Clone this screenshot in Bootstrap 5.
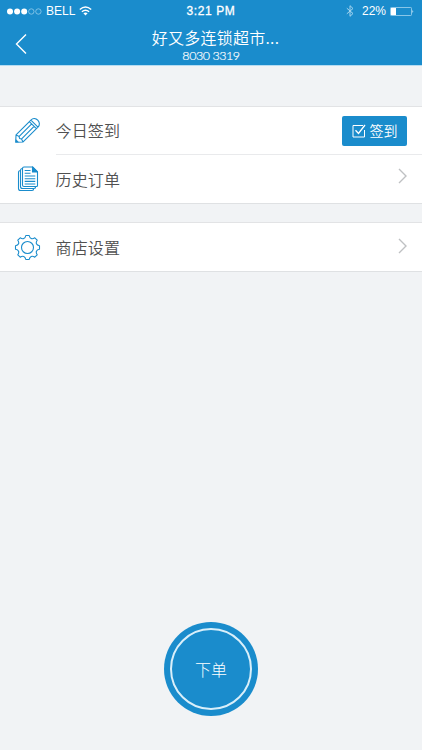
<!DOCTYPE html>
<html lang="zh-CN">
<head>
<meta charset="utf-8">
<meta name="viewport" content="width=device-width, initial-scale=1">
<title>好又多连锁超市</title>
<link href="https://cdn.jsdelivr.net/npm/bootstrap@5.3.0/dist/css/bootstrap.min.css" rel="stylesheet">
<style>
:root{--brand:#1a8ccc}
body{background:#f1f3f5;font-family:"Liberation Sans","Noto Sans CJK SC",sans-serif;color:#505050}
svg{display:block;flex:none;overflow:visible}
.screen{height:750px;overflow:hidden}
.topbar{height:66px;background:var(--brand);border-bottom:1px solid #b5dcf2}
.status{height:21px;font-size:12px;line-height:21px;display:grid;grid-template-columns:1fr 50px 1fr}
.status span{padding-top:1px}
.clock{letter-spacing:.6px;-webkit-text-stroke:.3px #fff;white-space:nowrap}
.titlebar{height:44px;display:grid;grid-template-columns:48px 1fr 48px}
.shop{font:350 16px/20px "Noto Sans CJK SC",sans-serif;letter-spacing:.25px;padding-top:6px;padding-left:9px}
.phone{font:300 12.5px/14px Lato,sans-serif;letter-spacing:-.45px;margin-top:2px;-webkit-text-stroke:.2px #fff}
.group{border-top:1px solid #e2e3e5;border-bottom:1px solid #dfe1e3;padding-left:15px}
.first{margin-top:40px;height:98px}
.second{margin-top:18px;height:50px}
.entry{height:48px}
.icon-cell{width:25px;margin-right:15.5px}
.entry .body{height:48px;padding-right:15px}
.ruled{border-bottom:1px solid #e9eaec}
.label{font:350 16px/24px "Noto Sans CJK SC",sans-serif;letter-spacing:.15px;padding-bottom:1px}
.sign{width:65px;height:30px;background:var(--brand);border-radius:2px;font:350 14px/20px "Noto Sans CJK SC",sans-serif;gap:4px}
.sign span{padding-bottom:2px}
.order{width:94px;height:94px;background:var(--brand);margin-bottom:34px;padding:6px}
.ring{border:2px solid #d9effa;font:300 16px/24px "Noto Sans CJK SC",sans-serif}
</style>
<script src="https://cdn.jsdelivr.net/npm/bootstrap@5.3.0/dist/js/bootstrap.bundle.min.js"></script>
</head>
<body>
<div class="screen d-flex flex-column">
  <header class="topbar text-white">
    <div class="status">
      <div class="d-flex align-items-center ps-2">
        <svg width="34" height="7" viewBox="0 0 34 7"><g fill="#fff"><circle cx="2" cy="3.5" r="3"/><circle cx="9.1" cy="3.5" r="3"/><circle cx="16.2" cy="3.5" r="3"/></g><g fill="none" stroke="#a5d5ef" stroke-width=".7"><circle cx="23.3" cy="3.5" r="2.7"/><circle cx="30.4" cy="3.5" r="2.7"/></g></svg>
        <span class="ms-1">BELL</span>
        <svg class="ms-1" width="13" height="10" viewBox="0 0 13 10"><g fill="none" stroke="#fff" stroke-width="1.5"><path d="M.8 3.5Q6.5-1.4 12.2 3.5M2.9 5.8Q6.5 2.6 10.1 5.8"/></g><path d="M4.4 7.3Q6.5 5.6 8.6 7.3L6.5 9.5Z" fill="#fff"/></svg>
      </div>
      <span class="clock text-center">3:21 PM</span>
      <div class="d-flex align-items-center justify-content-end">
        <svg width="8" height="12" viewBox="0 0 8 12"><path d="M.8 3.2L7 8.5 4 11.3V.7L7 3.5.8 8.8" fill="none" stroke="#a5d5ef"/></svg>
        <span class="ms-2">22%</span>
        <svg width="24" height="9" viewBox="0 0 24 9" class="ms-1 me-2"><rect x=".5" y=".5" width="21" height="8" rx=".8" fill="none" stroke="#a5d5ef" stroke-width=".8"/><path d="M1 1h5v7H1z" fill="#fff"/><path d="M22.5 3q1.5 1.5 0 3z" fill="#fff"/></svg>
      </div>
    </div>
    <div class="titlebar">
      <svg width="48" height="44" viewBox="0 0 48 44"><path d="M26 13.5L16.5 23 26 32.5" fill="none" stroke="#fff" stroke-width="1.4"/></svg>
      <div class="text-center">
        <div class="shop">好又多连锁超市...</div>
        <div class="phone">8030 3319</div>
      </div>
    </div>
  </header>

  <section class="group first bg-white">
    <div class="entry d-flex align-items-center">
      <div class="icon-cell">
        <svg width="25" height="26" viewBox="0 0 25 26" fill="none" stroke="#1a8ccc" stroke-width="1.1" stroke-linejoin="round"><g transform="translate(12 13) rotate(45)"><path d="M-5-10.5C-5-16.8 5-16.8 5-10.5V10.5L0 16 -5 10.5ZM-5-10.5H5M-5-8.3H5M-1.7-8.3V10M1.7-8.3V10M-5 10.5L-1.7 9.5 0 10.5 1.7 9.5 5 10.5"/><path d="M-2.2 13.6H2.2L0 16Z" fill="#1a8ccc" stroke="none"/></g></svg>
      </div>
      <div class="body ruled d-flex flex-fill align-items-center justify-content-between">
        <span class="label">今日签到</span>
        <button type="button" class="sign btn p-0 border-0 text-white d-flex align-items-center justify-content-center">
          <svg width="14" height="14" viewBox="0 0 14 14" fill="none" stroke="#fff"><path d="M11 1.5H1V13H12.5V6"/><path d="M3.5 6.2L6.5 9.5 13 1" stroke-width="1.3"/></svg>
          <span>签到</span>
        </button>
      </div>
    </div>
    <div class="entry d-flex align-items-center">
      <div class="icon-cell d-flex justify-content-center">
        <svg width="20" height="26" viewBox="0 0 20 26" fill="none" stroke="#1a8ccc" stroke-width="1.1" stroke-linejoin="round"><path d="M6 1H14.5L19.5 6V19.5Q19.5 20.5 18.5 20.5H6Q4.5 20.5 4.5 19V2.5Q4.5 1 6 1Z"/><path d="M4.5 2.5Q2.5 2.5 2.5 4.5V20.5Q2.5 22.5 4.5 22.5H16Q17.7 22.5 17.7 20.5M2.5 4.5Q.5 4.5 .5 6.5V22.5Q.5 24.5 2.5 24.5H14Q15.7 24.5 15.7 22.5"/><path d="M14.5 1V6H19.5Z" fill="#1a8ccc"/><path d="M6.7 4.5H12.5M6.7 7.2H12.5M6.7 10H17.3M6.7 12.7H17.3M6.7 15.4H17.3M6.7 18H17.3"/></svg>
      </div>
      <div class="body d-flex flex-fill align-items-center justify-content-between">
        <span class="label">历史订单</span>
        <svg width="9" height="16" viewBox="0 0 9 16" class="mb-2"><path d="M1 2L8 9 1 16" fill="none" stroke="#bfc1c3" stroke-width="1.4"/></svg>
      </div>
    </div>
  </section>

  <section class="group second bg-white">
    <div class="entry d-flex align-items-center">
      <div class="icon-cell">
        <svg width="25" height="25" viewBox="-12.5 -12.5 25 25" fill="none" stroke="#1a8ccc" stroke-width="1.1" stroke-linejoin="round"><path d="M-1.7-12L1.7-12C2.3-8.8 4.6-7.85 7.28-9.69L9.69-7.28C7.85-4.6 8.8-2.3 12-1.7L12 1.7C8.8 2.3 7.85 4.6 9.69 7.28L7.28 9.69C4.6 7.85 2.3 8.8 1.7 12L-1.7 12C-2.3 8.8-4.6 7.85-7.28 9.69L-9.69 7.28C-7.85 4.6-8.8 2.3-12 1.7L-12-1.7C-8.8-2.3-7.85-4.6-9.69-7.28L-7.28-9.69C-4.6-7.85-2.3-8.8-1.7-12Z"/><circle r="6"/></svg>
      </div>
      <div class="body d-flex flex-fill align-items-center justify-content-between">
        <span class="label">商店设置</span>
        <svg width="9" height="16" viewBox="0 0 9 16" class="mb-1"><path d="M1 2L8 9 1 16" fill="none" stroke="#bfc1c3" stroke-width="1.4"/></svg>
      </div>
    </div>
  </section>

  <button type="button" class="order btn rounded-circle border-0 mt-auto mx-auto">
    <span class="ring d-flex w-100 h-100 rounded-circle align-items-center justify-content-center text-white">下单</span>
  </button>
</div>
</body>
</html>
